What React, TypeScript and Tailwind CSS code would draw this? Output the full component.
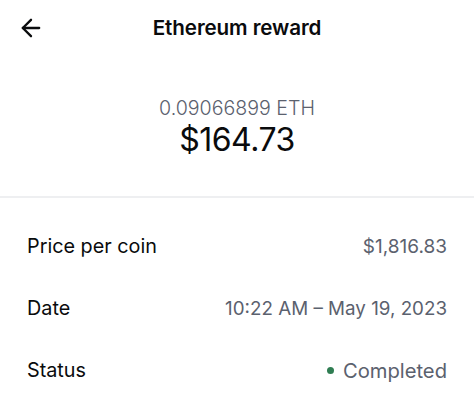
import { ArrowLeft } from "lucide-react";

const rows = [
  { label: "Price per coin", value: "$1,816.83", size: "text-[19px]" },
  { label: "Date", value: "10:22 AM – May 19, 2023", size: "text-[18.8px]" },
  { label: "Status", value: "Completed", size: "text-[20.2px]", dot: true },
];

export default function App() {
  return (
    <div className="w-[474px] h-[411px] bg-white text-[#0a0b0d] font-['Inter',sans-serif] overflow-hidden">
      <div className="relative h-14 flex items-center justify-center">
        <button className="absolute left-[17px] top-[14px] text-[#0a0b0d]">
          <ArrowLeft size={28} strokeWidth={2} />
        </button>
        <h1 className="text-[20.6px] font-semibold tracking-[-0.1px]">Ethereum reward</h1>
      </div>

      <div className="flex flex-col items-center pt-10 pb-[38px]">
        <div className="text-[19.6px] leading-6 text-[#5b616e] font-light">0.09066899 ETH</div>
        <div className="mt-[2px] text-[32px] leading-9 tracking-[-0.5px]">$164.73</div>
      </div>

      <div className="h-[2px] bg-[#eeeff1]" />

      <div className="pt-[18px] px-[27px]">
        {rows.map((r) => (
          <div key={r.label} className="h-[62px] flex items-center justify-between">
            <span className="text-[19.8px]">{r.label}</span>
            <span className={`flex items-center gap-[9px] text-[#5b616e] ${r.size}`}>
              {r.dot && <span className="w-[7px] h-[7px] rounded-full bg-[#2f7d52]" />}
              {r.value}
            </span>
          </div>
        ))}
      </div>
    </div>
  );
}
